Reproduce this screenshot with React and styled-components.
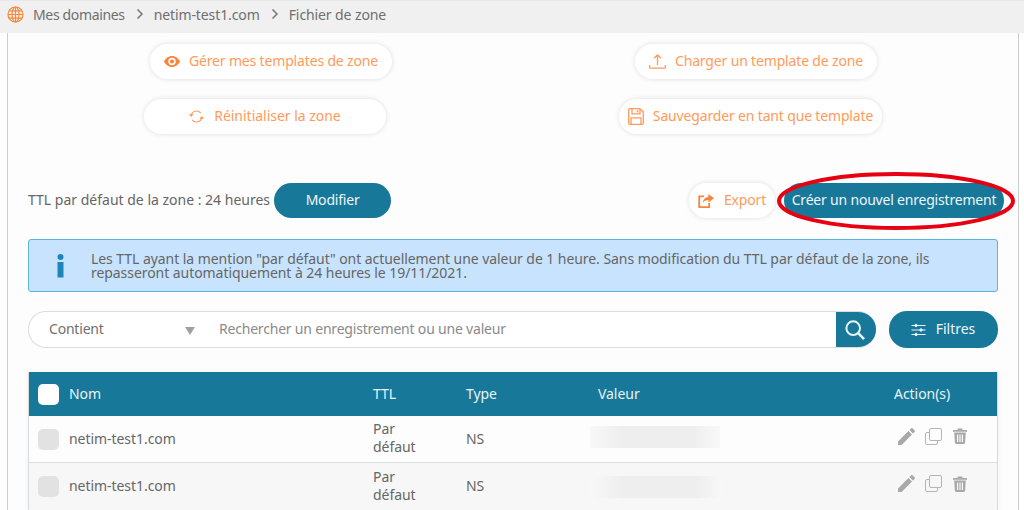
import React from "react";
import styled, { createGlobalStyle } from "styled-components";

const Global = createGlobalStyle`
  html, body { margin: 0; padding: 0; background: #fff; height: 510px; overflow: hidden; }
  body { font-family: "Noto Sans", "Open Sans", sans-serif; color: #666; }
  * { box-sizing: border-box; }
`;

const orange = "#ff9a5c";
const teal = "#187899";

const TopBar = styled.div`
  height: 33px; background: #f0f0f0; display: flex; align-items: center; padding: 0 0 6px 7px;
  border-top: 1px solid #e8e8e8; font-size: 14px; color: #6f6f6f;
`;
const Crumb = styled.span`letter-spacing: ${p => p.$ls}px;`;
const Chevron = styled.svg`width: 8px; height: 10px; margin: 0 10px 0 11px; fill: none; stroke: #777; stroke-width: 1.5;`;
const Panel = styled.div`
  margin: 0 5px 0 7px; border-left: 1px solid #ccc; border-right: 1px solid #ccc; background: #fdfdfd;
  height: 477px; overflow: hidden; padding: 11px 20px 0; position: relative;
`;
const ButtonRow = styled.div`
  display: flex; padding-left: ${p => p.$pl}px; gap: ${p => p.$gap}px; margin-bottom: ${p => p.$mb}px;
`;
const PillLink = styled.div`
  height: 35px; width: ${p => p.$w}px; border-radius: 18px; background: #fff; box-shadow: 0 0 5px rgba(0,0,0,.13);
  display: flex; align-items: center; justify-content: center; gap: ${p => p.$gap || 9}px; color: ${orange}; font-size: 14px;
  letter-spacing: ${p => p.$ls ?? -0.16}px;
  white-space: nowrap; flex: none; padding-bottom: 2px;
  svg { flex: none; margin-top: 2px; }
`;
const TtlRow = styled.div`display: flex; align-items: center; margin-top: 49px;`;
const TtlText = styled.span`font-size: 14px; color: #666; margin-right: 4px; margin-top: -2px;`;
const SolidBtn = styled.div`
  height: ${p => p.$h || 35}px; width: ${p => p.$w}px; background: ${teal}; border-radius: 18px; color: #eef6f9;
  display: flex; align-items: center; justify-content: center; gap: ${p => p.$gap || 0}px; font-size: 14px;
  letter-spacing: ${p => p.$ls ?? -0.2}px; white-space: nowrap; flex: none;
  padding-bottom: 2px;
`;
const CreateBtn = styled(SolidBtn)`margin-left: 9px; margin-right: -6px;`;
const Spacer = styled.div`flex: 1;`;
const Alert = styled.div`
  margin-top: 21px; height: 53px; background: #c8e3fd; border: 1px solid #5ab5dc; border-radius: 3px;
  display: flex; align-items: center; padding-left: 28px; gap: 27px;
  font-size: 14px; line-height: 14px; letter-spacing: -0.06px; color: #666;
`;
const InfoMark = styled.svg`width: 7px; height: 24px; fill: #1c86b8; flex: none;`;
const SearchRow = styled.div`display: flex; margin-top: 19px; gap: 13px;`;
const SearchBox = styled.div`
  flex: 1; height: 37px; border: 1px solid #ddd; border-right: 0; border-radius: 18px; background: #fff;
  display: flex; align-items: center; padding-left: 20px; font-size: 14px; overflow: hidden; color: #707070; letter-spacing: -0.2px;
`;
const SelectLabel = styled.span`width: 136px; margin-top: -3px;`;
const Caret = styled.span`
  width: 0; height: 0; border-left: 5px solid transparent; border-right: 5px solid transparent; border-top: 8px solid #a0a0a0; margin-top: 2px;
`;
const Placeholder = styled.span`margin-left: 24px; flex: 1; color: #8a8a8a; margin-top: -3px;`;
const SearchBtn = styled.div`
  width: 40px; height: 37px; margin-top: -1px; margin-bottom: -1px; background: ${teal}; display: flex; align-items: center; justify-content: center; padding-right: 3px;
`;
const Table = styled.div`
  margin-top: 24px; border: 1px solid #d5dcdf; border-top: 0; box-shadow: 0 0 6px rgba(0,0,0,.05);
`;
const Row = styled.div`
  display: grid; grid-template-columns: 344px 93px 132px 1fr 104px; align-items: center;
  height: ${p => p.$h}px; background: ${p => p.$bg}; color: ${p => p.$fg}; font-size: 14px; letter-spacing: -0.05px;
  border-bottom: ${p => p.$line ? "1px solid #d9e0e2" : "0"};
`;
const Cell = styled.div`margin-top: -2px;`;
const NameCell = styled.div`display: flex; align-items: center; gap: 10px; padding-left: 9px;`;
const NameText = styled.span`margin-top: -2px;`;
const ActionHead = styled(Cell)`padding-left: 1px; white-space: nowrap;`;
const Check = styled.span`width: 21px; height: 21px; border-radius: 5px; background: ${p => p.$bg};`;
const TtlCell = styled.div`line-height: 18px; margin-top: -2px;`;
const Blur = styled.div`
  width: ${p => p.$w}px; height: 22px; margin-left: -8px; margin-top: ${p => p.$mt}px;
  background: linear-gradient(90deg, #f8f8f8, #eeeeee 25%, #eeeeee 80%, #f8f8f8);
`;
const Actions = styled.div`display: flex; align-items: center; gap: 10px; margin-top: -6px; padding-left: 5px;`;

const O = { stroke: orange, fill: "none", strokeWidth: 1.3 };

const Globe = () => (
  <svg width="17" height="17" viewBox="0 0 17 17" fill="none" stroke="#f58a3c" strokeWidth="1.2" style={{ marginRight: 9, marginTop: 1 }}>
    <circle cx="8.5" cy="8.5" r="7.5" />
    <ellipse cx="8.5" cy="8.5" rx="3.5" ry="7.5" />
    <path d="M1 8.5h15M2 4.8h13M2 12.2h13M8.5 1v15" />
  </svg>
);
const Eye = () => (
  <svg width="16" height="11" viewBox="0 0 16 11">
    <path fillRule="evenodd" fill="#f9843a" d="M8 0c3.6 0 6.500 2.400 8 5.500C14.500 8.600 11.600 11 8 11S1.500 8.600 0 5.500C1.500 2.400 4.400 0 8 0zm0 1.800a3.700 3.700 0 100 7.400 3.700 3.700 0 000-7.400zm0 1.600a2.100 2.100 0 110 4.200 2.100 2.100 0 010-4.200z" />
  </svg>
);
const Refresh = () => (
  <svg width="15" height="13" viewBox="0 0 16 14" {...O} strokeWidth="1.1">
    <path d="M2.2 6A5.8 5.8 0 0 1 12.6 3.4" />
    <path d="M13.8 8A5.8 5.8 0 0 1 3.4 10.6" />
    <path d="M0.5 4.6l1.8 2 1.9-2" fill={orange} />
    <path d="M11.8 9.4l2-2 1.8 2" fill={orange} />
  </svg>
);
const Upload = () => (
  <svg width="17" height="15" viewBox="0 0 17 15" {...O}>
    <path d="M8.5 11V1M5 4.3L8.5 1 12 4.3" />
    <path d="M.7 11v2.4c0 .5.3.8.8.8h14c.5 0 .8-.3.8-.8V11" />
  </svg>
);
const Floppy = () => (
  <svg width="16" height="17" viewBox="0 0 16 17" {...O}>
    <path d="M1.5.7h10.2l3.6 3.2v11c0 .8-.5 1.400-1.300 1.400H1.700c-.7 0-1-.6-1-1.300V1.600c0-.6.3-.9.8-.9z" />
    <path d="M4 .8v5h8V1" />
    <path d="M3 16V9.800h10V16" />
    <path d="M9.500 2v2.400" strokeWidth="1.600" />
  </svg>
);
const ExportIcon = () => (
  <svg width="16" height="14" viewBox="0 0 16 14">
    <path fill="none" stroke="#f9843a" strokeWidth="1.800" d="M6 2.400H1.200v10.700h10V9" />
    <path fill="#f9843a" d="M10.400 0L16 4.300l-5.600 4.300V6C7.600 6 6 7 4.800 9c.2-3.400 2.200-5.700 5.600-6z" />
  </svg>
);
const SearchIcon = () => (
  <svg width="20" height="20" viewBox="0 0 22 22" fill="none" stroke="#eaf4f7" strokeWidth="2.200">
    <circle cx="9" cy="9" r="7.500" />
    <path d="M14.500 14.500l6.500 6.500" strokeWidth="2.800" />
  </svg>
);
const Sliders = () => (
  <svg width="15" height="14" viewBox="0 0 15 14" fill="#eaf4f7" stroke="#eaf4f7" strokeWidth="1" style={{ marginTop: 2, marginLeft: -1 }}>
    <path d="M.5 2.500h14M.5 7h14M.5 11.500h14" />
    <circle cx="5" cy="2.500" r="1.200" />
    <circle cx="10" cy="7" r="1.200" />
    <circle cx="5" cy="11.500" r="1.200" />
  </svg>
);
const Info = () => (
  <InfoMark viewBox="0 0 7 24">
    <circle cx="3.500" cy="3" r="3" />
    <rect x="0.500" y="8" width="6" height="15.500" />
  </InfoMark>
);
const Pencil = () => (
  <svg width="17" height="17" viewBox="0 0 17 17" fill="#a9a9a9">
    <path d="M0 17v-3.600L10.400 3l3.600 3.600L3.600 17zM11.400 2L13 .4c.5-.5 1.200-.5 1.700 0l1.900 1.900c.5.5.5 1.200 0 1.700L15 5.600z" />
  </svg>
);
const CopyIcon = () => (
  <svg width="17" height="17" viewBox="0 0 17 17" fill="none" stroke="#b4b4b4" strokeWidth="1">
    <rect x="4.500" y=".5" width="12" height="12" rx="1.500" />
    <path d="M4.500 4.500H2A1.500 1.500 0 0 0 .5 6v9A1.500 1.500 0 0 0 2 16.500h9a1.500 1.500 0 0 0 1.500-1.500v-2.500" />
  </svg>
);
const Trash = () => (
  <svg width="14" height="16" viewBox="0 0 14 16" fill="#a9a9a9" style={{ marginLeft: 1 }}>
    <path d="M0 2h4.500V.5h5V2H14v1.700H0z" />
    <path fillRule="evenodd" d="M1.200 4.500h11.600l-.7 10.300c0 .7-.5 1.200-1.200 1.200H3.100c-.7 0-1.200-.5-1.200-1.200zM4 6.500v7.500h1.200V6.500zm2.400 0v7.500h1.200V6.500zm2.400 0v7.500H10V6.500z" />
  </svg>
);
const Ellipse = styled.svg`
  position: absolute; left: 768px; top: 139px; width: 242px; height: 58px; pointer-events: none;
`;

const ActionIcons = () => (
  <Actions>
    <Pencil />
    <CopyIcon />
    <Trash />
  </Actions>
);

const DataRow = ({ bg, w, line, blurMt }) => (
  <Row $h={47} $bg={bg} $fg="#666" $line={line}>
    <NameCell>
      <Check $bg="#e2e2e2" />
      <NameText>netim-test1.com</NameText>
    </NameCell>
    <TtlCell>Par<br />défaut</TtlCell>
    <Cell>NS</Cell>
    <Blur $w={w} $mt={blurMt} />
    <ActionIcons />
  </Row>
);

const Sep = () => (
  <Chevron viewBox="0 0 8 10"><path d="M1.500 .5L6 5 1.500 9.500" /></Chevron>
);

export default function App() {
  return (
    <>
      <Global />
      <TopBar>
        <Globe />
        <Crumb $ls={-0.35}>Mes domaines</Crumb>
        <Sep />
        <Crumb $ls={-0.1}>netim-test1.com</Crumb>
        <Sep />
        <Crumb $ls={-0.1}>Fichier de zone</Crumb>
      </TopBar>
      <Panel>
        <ButtonRow $pl={122} $gap={243} $mb={20}>
          <PillLink $w={242}><Eye />Gérer mes templates de zone</PillLink>
          <PillLink $w={242}><Upload />Charger un template de zone</PillLink>
        </ButtonRow>
        <ButtonRow $pl={116} $gap={233} $mb={0}>
          <PillLink $w={242} $gap={10} $ls={-0.02}><Refresh />Réinitialiser la zone</PillLink>
          <PillLink $w={263}><Floppy />Sauvegarder en tant que template</PillLink>
        </ButtonRow>
        <TtlRow>
          <TtlText>TTL par défaut de la zone : 24 heures</TtlText>
          <SolidBtn $w={117}>Modifier</SolidBtn>
          <Spacer />
          <PillLink $w={86} $gap={10}><ExportIcon />Export</PillLink>
          <CreateBtn $w={220}>Créer un nouvel enregistrement</CreateBtn>
        </TtlRow>
        <Alert>
          <Info />
          <div>
            Les TTL ayant la mention "par défaut" ont actuellement une valeur de 1 heure. Sans modification du TTL par défaut de la zone, ils<br />
            repasseront automatiquement à 24 heures le 19/11/2021.
          </div>
        </Alert>
        <SearchRow>
          <SearchBox>
            <SelectLabel>Contient</SelectLabel>
            <Caret />
            <Placeholder>Rechercher un enregistrement ou une valeur</Placeholder>
            <SearchBtn><SearchIcon /></SearchBtn>
          </SearchBox>
          <SolidBtn $w={109} $h={37} $gap={10} $ls={0}><Sliders />Filtres</SolidBtn>
        </SearchRow>
        <Table>
          <Row $h={44} $bg={teal} $fg="#e8f3f6">
            <NameCell>
              <Check $bg="#fff" />
              <NameText>Nom</NameText>
            </NameCell>
            <Cell>TTL</Cell>
            <Cell>Type</Cell>
            <Cell>Valeur</Cell>
            <ActionHead>Action(s)</ActionHead>
          </Row>
          <DataRow bg="#fdfdfd" w={130} line blurMt={-5} />
          <DataRow bg="#f7f7f7" w={132} blurMt={1} />
        </Table>
        <Ellipse viewBox="0 0 242 58">
          <ellipse cx="120" cy="29" rx="117" ry="27" fill="none" stroke="#e60012" strokeWidth="4" />
        </Ellipse>
      </Panel>
    </>
  );
}
